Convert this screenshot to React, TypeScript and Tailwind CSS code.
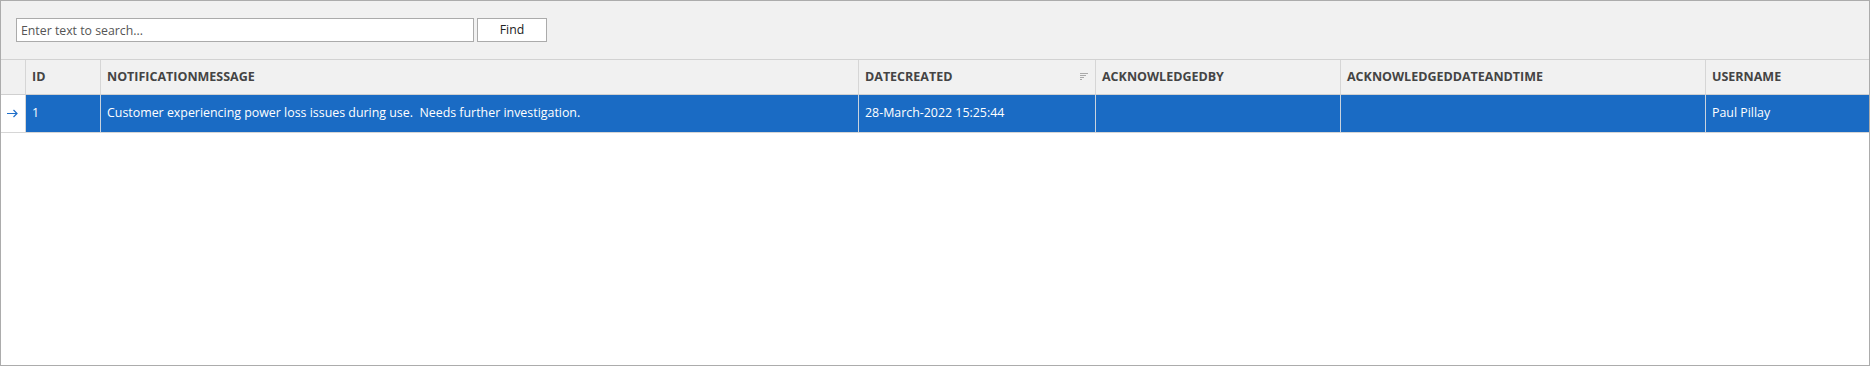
import React from 'react';

const cols = [
  { key: 'id', title: 'ID', w: 'w-[75px]' },
  { key: 'msg', title: 'NOTIFICATIONMESSAGE', w: 'w-[758px]' },
  { key: 'date', title: 'DATECREATED', w: 'w-[237px]', sorted: true },
  { key: 'ackBy', title: 'ACKNOWLEDGEDBY', w: 'w-[245px]' },
  { key: 'ackAt', title: 'ACKNOWLEDGEDDATEANDTIME', w: 'w-[365px]' },
  { key: 'user', title: 'USERNAME', w: 'flex-1', last: true },
];

const row: Record<string, string> = {
  id: '1',
  msg: 'Customer experiencing power loss issues during use.  Needs further investigation.',
  date: '28-March-2022 15:25:44',
  ackBy: '',
  ackAt: '',
  user: 'Paul Pillay',
};

const SortGlyph = () => (
  <svg width="9" height="8" viewBox="0 0 9 8" className="shrink-0">
    <g fill="#a9a9a9">
      <rect x="0" y="0" width="8" height="1" />
      <rect x="0" y="2" width="6" height="1" />
      <rect x="0" y="4" width="4" height="1" />
      <rect x="0" y="6" width="2" height="1" />
    </g>
  </svg>
);

const RowArrow = () => (
  <svg width="11" height="9" viewBox="0 0 11 9">
    <path d="M0 4.5H10M6.5 1L10 4.5L6.5 8" stroke="#1f6fca" strokeWidth="1.2" fill="none" />
  </svg>
);

export default function App() {
  return (
    <div className="w-[1870px] h-[366px] border border-[#acacac] bg-white flex flex-col font-['Open_Sans','Noto_Sans',sans-serif]">
      {/* search bar */}
      <div className="h-[59px] shrink-0 bg-[#f1f1f1] border-b border-[#d2d2d2] flex items-start pl-[15px] pt-[17px] gap-[3px]">
        <input
          className="w-[458px] h-[24px] border border-[#ababab] bg-white px-[4px] text-[12.3px] text-[#333] outline-none placeholder:text-[#555]"
          placeholder="Enter text to search..."
        />
        <button className="w-[70px] h-[24px] border border-[#ababab] bg-white text-[12.3px] text-[#222]">Find</button>
      </div>

      {/* header */}
      <div className="h-[35px] shrink-0 bg-[#f1f1f1] border-b border-[#d0d0d0] flex">
        <div className="w-[25px] border-r border-[#d6d6d6]" />
        {cols.map((c) => (
          <div
            key={c.key}
            className={`${c.w} ${c.last ? '' : 'border-r border-[#d6d6d6]'} flex items-center justify-between pl-[6px] pr-[6px] text-[12.5px] font-bold text-[#444]`}
          >
            <span>{c.title}</span>
            {c.sorted && <SortGlyph />}
          </div>
        ))}
      </div>

      {/* data row */}
      <div className="h-[38px] shrink-0 border-b border-[#d6d6d6] flex">
        <div className="w-[25px] border-r border-[#d6d6d6] flex items-center justify-center pr-[2px]">
          <RowArrow />
        </div>
        {cols.map((c) => (
          <div
            key={c.key}
            className={`${c.w} ${c.last ? '' : 'border-r border-[#c9d3de]'} bg-[#1a6bc4] flex items-center pl-[6px] text-[12.4px] text-white whitespace-pre`}
          >
            {row[c.key]}
          </div>
        ))}
      </div>

      <div className="flex-1 bg-white" />
    </div>
  );
}
